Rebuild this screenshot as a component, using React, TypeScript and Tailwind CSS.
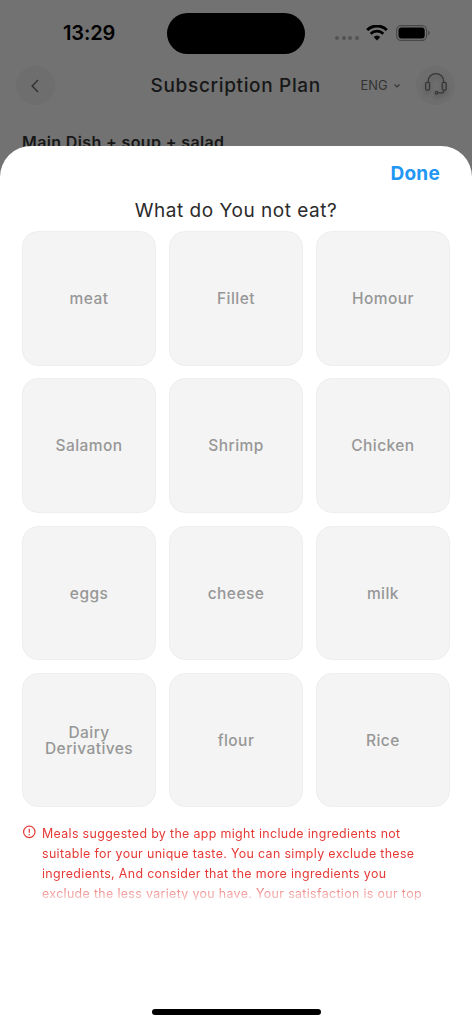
import { useState } from 'react';

const ingredients = [
  { id: 1, name: 'meat' },
  { id: 2, name: 'Fillet' },
  { id: 3, name: 'Homour' },
  { id: 4, name: 'Salamon' },
  { id: 5, name: 'Shrimp' },
  { id: 6, name: 'Chicken' },
  { id: 7, name: 'eggs' },
  { id: 8, name: 'cheese' },
  { id: 9, name: 'milk' },
  { id: 10, name: 'Dairy Derivatives' },
  { id: 11, name: 'flour' },
  { id: 12, name: 'Rice' },
];

const noteLines = [
  'Meals suggested by the app might include ingredients not',
  'suitable for your unique taste. You can simply exclude these',
  'ingredients, And consider that the more ingredients you',
  'exclude the less variety you have. Your satisfaction is our top',
];

function WifiIcon() {
  return (
    <svg width="22" height="16" viewBox="0 0 22 16" fill="none">
      <path d="M1.2 5a14 14 0 0 1 19.6 0" stroke="#000" strokeWidth="3" />
      <path d="M4.7 8.7a9.1 9.1 0 0 1 12.6 0" stroke="#000" strokeWidth="2.7" />
      <path d="M11 15.4 7.7 12.100a4.8 4.8 0 0 1 6.6 0Z" fill="#000" />
    </svg>
  );
}

function BatteryIcon() {
  return (
    <svg width="35" height="16" viewBox="0 0 35 16" fill="none">
      <rect x="0.6" y="0.6" width="30" height="14.8" rx="4.6" stroke="#474747" strokeWidth="1.1" />
      <rect x="2.5" y="2.6" width="26.2" height="10.8" rx="2.9" fill="#000" />
      <path d="M32.2 5.5c1.9.7 1.9 4.3 0 5Z" fill="#474747" />
    </svg>
  );
}

function HeadsetIcon() {
  return (
    <svg
      width="24"
      height="24"
      viewBox="0 0 24 24"
      fill="none"
      stroke="#363636"
      strokeWidth="1.25"
      className="drop-shadow-[0_3px_2px_rgba(0,0,0,0.25)]"
    >
      <rect x="1.6" y="10.4" width="4" height="7.6" rx="1.3" />
      <rect x="18.2" y="10.4" width="4" height="7.6" rx="1.3" />
      <path d="M4.2 10.4V9.2a7.7 7.7 0 0 1 15.4 0v1.2" />
      <path d="M20 18.2v.4c0 1.5-.9 2.2-2.3 2.2h-3.6" />
      <circle cx="12.5" cy="20.7" r="1.3" />
    </svg>
  );
}

function StatusBar() {
  return (
    <div className="flex h-[65px] items-center">
      <div className="w-[167px] shrink-0 pl-[63px] text-[20px] font-semibold tracking-[-0.1px] text-black">13:29</div>
      <div className="mt-[1px] h-[41px] w-[138px] shrink-0 rounded-full bg-black" />
      <div className="flex items-center pl-[30px]">
        <div className="mt-[10px] flex gap-[2.6px]">
          {[0, 1, 2, 3].map(dot => (
            <span key={dot} className="h-[4px] w-[4px] rounded-full bg-[#545454]" />
          ))}
        </div>
        <div className="ml-[7.5px]">
          <WifiIcon />
        </div>
        <div className="ml-[8px]">
          <BatteryIcon />
        </div>
      </div>
    </div>
  );
}

export default function App() {
  const [excluded, setExcluded] = useState<number[]>([]);

  const toggleItem = (id: number) => {
    setExcluded(prev => (prev.includes(id) ? prev.filter(i => i !== id) : [...prev, id]));
  };

  return (
    <div className="flex h-[1024px] w-[472px] flex-col overflow-hidden bg-[#727272] font-['Inter',sans-serif]">
      {/* Page behind the sheet */}
      <div className="h-[176px] shrink-0">
        <StatusBar />
        <div className="flex h-[41px] items-center pl-[16px] pr-[17px]">
          <button className="flex h-[39px] w-[39px] items-center justify-center rounded-full bg-[#6e6e6e]">
            <svg width="8" height="14" viewBox="0 0 8 14" fill="none" stroke="#333" strokeWidth="1.5">
              <path d="M7 1 1.2 7 7 13" />
            </svg>
          </button>
          <h1 className="ml-[96px] mt-[2px] w-[210px] shrink-0 whitespace-nowrap text-[19px] font-medium tracking-[0.65px] text-[#171717]">
            Subscription Plan
          </h1>
          <div className="flex w-[56px] items-center text-[12.8px] text-[#333]">
            ENG
            <svg width="6" height="4" viewBox="0 0 6 4" fill="none" stroke="#333" strokeWidth="1.1" className="ml-[6.5px] mt-[1px]">
              <path d="M.5.5 3 3 5.5.5" />
            </svg>
          </div>
          <div className="flex h-[39px] w-[39px] shrink-0 items-center justify-center rounded-full bg-[#6e6e6e] pb-[3px]">
            <HeadsetIcon />
          </div>
        </div>
        <p className="mt-[24px] pl-[22px] text-[16px] font-semibold leading-[24px] tracking-[0.37px] text-[#171717]">
          Main Dish + soup + salad
        </p>
      </div>

      {/* Bottom sheet */}
      <div className="relative -mt-[30px] flex flex-1 flex-col rounded-t-[31px] bg-white px-[22px]">
        <div className="flex h-[53px] items-center justify-end pr-[10px] pt-[3px]">
          <button className="text-[19px] font-bold tracking-[0.25px] text-[#2196f3]">Done</button>
        </div>
        <h2 className="mb-[8px] text-center text-[19px] leading-[24px] tracking-[0.52px] text-[#2b2b2b]">
          What do You not eat?
        </h2>

        <div className="grid grid-cols-3 gap-[12.8px]">
          {ingredients.map(item => (
            <button
              key={item.id}
              onClick={() => toggleItem(item.id)}
              className={`flex h-[134.5px] items-center justify-center rounded-[16px] border px-4 pt-[1px] text-center text-[15.5px] font-medium leading-[15.5px] tracking-[0.45px] ${
                excluded.includes(item.id)
                  ? 'border-[#2196f3] bg-[#e3f2fd] text-[#2196f3]'
                  : 'border-[#eeeeee] bg-[#f4f4f4] text-[#979797]'
              }`}
            >
              {item.name}
            </button>
          ))}
        </div>

        <div className="mt-[16px] flex h-[77px] overflow-hidden [mask-image:linear-gradient(to_bottom,black_56px,transparent_84px)]">
          <svg width="14" height="14" viewBox="0 0 14 14" fill="none" stroke="#e53935" strokeWidth="1.2" className="mt-[2px] shrink-0">
            <circle cx="7.3" cy="6.9" r="5.7" />
            <path d="M7.3 3.7v4M7.3 8.9v1.3" />
          </svg>
          <div className="ml-[6px] whitespace-nowrap pt-[1px] text-[12.4px] leading-[20px] tracking-[0.35px] text-[#e53935]">
            {noteLines.map(line => (
              <p key={line}>{line}</p>
            ))}
          </div>
        </div>

        <div className="mb-[9px] mt-auto h-[6px] w-[169px] self-center rounded-full bg-black" />
      </div>
    </div>
  );
}
